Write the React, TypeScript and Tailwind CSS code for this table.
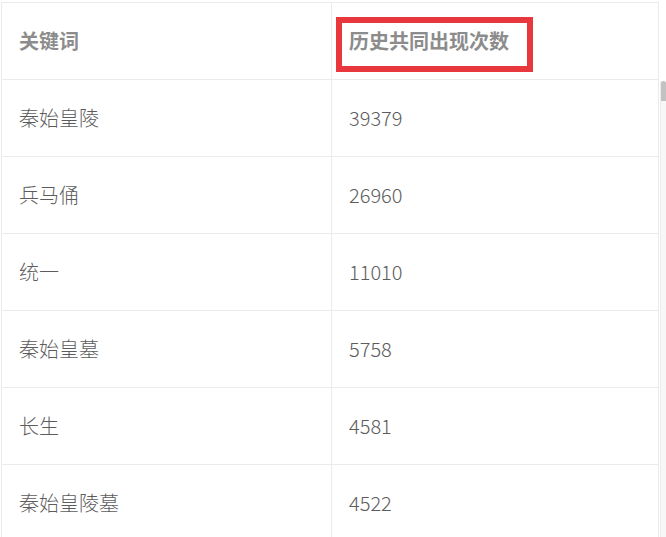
import React from "react";

const rows: [string, string][] = [
  ["秦始皇陵", "39379"],
  ["兵马俑", "26960"],
  ["统一", "11010"],
  ["秦始皇墓", "5758"],
  ["长生", "4581"],
  ["秦始皇陵墓", "4522"],
];

export default function App() {
  return (
    <div
      className="w-[666px] h-[537px] overflow-hidden bg-white pt-[2px] pl-[1px]"
      style={{ fontFamily: '"Noto Sans CJK SC", "Noto Sans", sans-serif' }}
    >
      <div className="flex w-[665px]">
        <div className="w-[658px] border-l border-t border-[#ebebeb]">
          {/* header */}
          <div className="flex h-[77px] border-b border-[#ebebeb]">
            <div className="w-[330px] border-r border-[#ebebeb] flex items-center pl-[17px] text-[20px] font-bold text-[#8c8c8c]">
              关键词
            </div>
            <div className="relative flex-1 border-r border-[#ebebeb] flex items-center pl-[17px] text-[20px] font-bold text-[#8c8c8c]">
              历史共同出现次数
              <div className="absolute left-[4px] top-[14px] w-[197px] h-[55px] border-[6px] border-[#e8373d]" />
            </div>
          </div>
          {rows.map(([k, v]) => (
            <div key={k} className="flex h-[77px] border-b border-[#ebebeb]">
              <div className="w-[330px] border-r border-[#ebebeb] flex items-center pl-[17px] text-[20px] font-light text-[#5c5c5c]">
                {k}
              </div>
              <div className="flex-1 border-r border-[#ebebeb] flex items-center pl-[17px] text-[20px] font-light text-[#5c5c5c]">
                {v}
              </div>
            </div>
          ))}
        </div>
        <div className="flex-1 pt-[77px] pl-[1px]">
          <div className="h-full border-l border-[#ececec] bg-[#f7f7f7]">
            <div className="mt-[2px] h-[20px] w-full rounded-t-[4px] bg-[#c2c2c2]" />
          </div>
        </div>
      </div>
    </div>
  );
}
